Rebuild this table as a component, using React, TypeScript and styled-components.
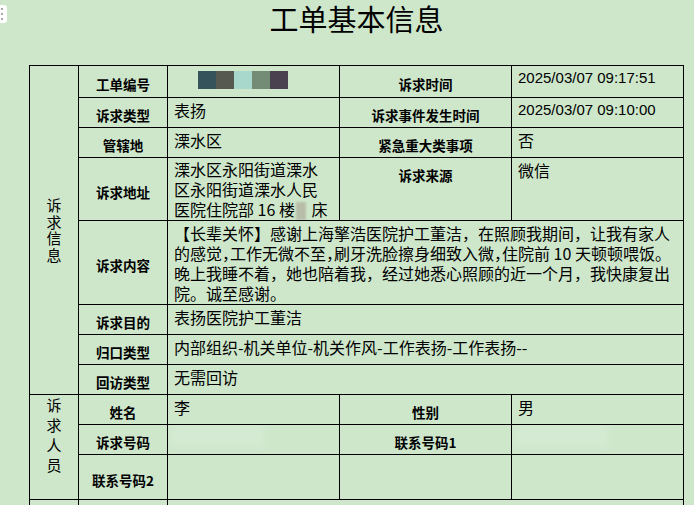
import React from "react";
import styled, { createGlobalStyle } from "styled-components";

const GlobalStyle = createGlobalStyle`
  *, *::before, *::after { box-sizing: border-box; }
  html, body { margin: 0; padding: 0; background: #cee7cb; }
  body {
    font-family: "Noto Sans CJK SC", "Noto Sans", sans-serif;
    color: #000;
  }
`;

const Page = styled.div`
  position: relative;
  min-height: 505px;
  padding: 0 0 0 29px;
  background: #cee7cb;
`;

const Handle = styled.div`
  position: absolute;
  left: 0;
  top: 5px;
  width: 7px;
  height: 18px;
  background: #ffffff;
  border-radius: 0 3px 3px 0;
  display: flex;
  flex-direction: column;
  justify-content: center;
  gap: 3px;
  padding-left: 1px;
`;

const Dot = styled.span`
  width: 2px;
  height: 2px;
  background: #8c8c8c;
  border-radius: 1px;
`;

const Sheet = styled.div`
  width: 655px;
  display: flex;
  flex-direction: column;
`;

const Title = styled.h1`
  margin: 0 0 29px;
  font-size: 29px;
  line-height: 36px;
  font-weight: 400;
  text-align: center;
`;

const Grid = styled.div`
  display: grid;
  grid-template-columns: 48px 88px 171px 171px 171px;
  grid-template-rows: 31px 29px 29px 62px 83px 29px 29px 29px 29px 29px 44px 40px;
  gap: 1px;
  padding: 1px;
  background: #000;
`;

const Cell = styled.div`
  position: relative;
  background: #cee7cb;
  min-width: 0;
  overflow: hidden;
`;

const GroupCell = styled(Cell)<{ $rows: number; $top?: boolean }>`
  grid-column: 1;
  grid-row: span ${(p) => p.$rows};
  display: flex;
  justify-content: center;
  align-items: ${(p) => (p.$top ? "flex-start" : "center")};
  font-size: 15px;
  line-height: ${(p) => (p.$top ? "20px" : "16.5px")};
`;

const VerticalText = styled.span`
  width: 1em;
  word-break: break-all;
  text-align: center;
`;

const Label = styled(Cell)<{ $top?: boolean }>`
  display: flex;
  justify-content: center;
  align-items: ${(p) => (p.$top ? "flex-start" : "center")};
  padding-top: ${(p) => (p.$top ? "9px" : "6px")};
  font-size: 13.5px;
  font-weight: 700;
  line-height: 17px;
  white-space: nowrap;
`;

const Value = styled(Cell)<{ $span?: number; $latin?: boolean; $pt?: number }>`
  grid-column: span ${(p) => p.$span ?? 1};
  padding: ${(p) => p.$pt ?? 2}px 6px 0;
  font-size: ${(p) => (p.$latin ? "15px" : "16px")};
  line-height: 20px;
  font-family: ${(p) =>
    p.$latin ? '"Liberation Sans", Arial, sans-serif' : "inherit"};
  white-space: nowrap;
`;

const Line = styled.div<{ $halt?: boolean }>`
  white-space: nowrap;
  font-feature-settings: ${(p) => (p.$halt ? '"halt"' : "normal")};
`;

const Mosaic = styled.div`
  display: flex;
  margin: 3px 0 0 24px;
`;

const Tile = styled.span<{ $c: string }>`
  width: 18px;
  height: 18px;
  background: ${(p) => p.$c};
`;

const Smudge = styled.span`
  display: inline-block;
  width: 10px;
  height: 18px;
  margin: 0 2px 0 1px;
  vertical-align: -4px;
  background: #b7bda8;
  filter: blur(1.2px);
`;

const Redact = styled.span`
  position: absolute;
  left: 2px;
  top: -2px;
  width: 95px;
  height: 24px;
  background: rgba(255, 255, 255, 0.14);
  filter: blur(4px);
`;

const tiles = ["#35535a", "#55594f", "#a8d8cc", "#748c76", "#4b4250"];

export default function App() {
  return (
    <>
      <GlobalStyle />
      <Page>
        <Handle>
          <Dot />
          <Dot />
          <Dot />
        </Handle>
        <Sheet>
          <Title>工单基本信息</Title>
          <Grid>
            <GroupCell $rows={8}>
              <VerticalText>诉求信息</VerticalText>
            </GroupCell>
            <Label>工单编号</Label>
            <Value>
              <Mosaic>
                {tiles.map((c) => (
                  <Tile key={c} $c={c} />
                ))}
              </Mosaic>
            </Value>
            <Label>诉求时间</Label>
            <Value $latin>2025/03/07 09:17:51</Value>

            <Label>诉求类型</Label>
            <Value>表扬</Value>
            <Label>诉求事件发生时间</Label>
            <Value $latin>2025/03/07 09:10:00</Value>

            <Label>管辖地</Label>
            <Value>溧水区</Value>
            <Label>紧急重大类事项</Label>
            <Value>否</Value>

            <Label>诉求地址</Label>
            <Value $pt={1}>
              <Line>溧水区永阳街道溧水</Line>
              <Line>区永阳街道溧水人民</Line>
              <Line>
                医院住院部 16 楼<Smudge /> 床
              </Line>
            </Value>
            <Label $top>诉求来源</Label>
            <Value>微信</Value>

            <Label>诉求内容</Label>
            <Value $span={3} $pt={2}>
              <Line>【长辈关怀】感谢上海擎浩医院护工董洁，在照顾我期间，让我有家人</Line>
              <Line $halt>的感觉，工作无微不至，刷牙洗脸擦身细致入微，住院前 10 天顿顿喂饭。</Line>
              <Line>晚上我睡不着，她也陪着我，经过她悉心照顾的近一个月，我快康复出</Line>
              <Line>院。诚至感谢。</Line>
            </Value>

            <Label>诉求目的</Label>
            <Value $span={3}>表扬医院护工董洁</Value>

            <Label>归口类型</Label>
            <Value $span={3}>内部组织-机关单位-机关作风-工作表扬-工作表扬--</Value>

            <Label>回访类型</Label>
            <Value $span={3}>无需回访</Value>

            <GroupCell $rows={3} $top>
              <VerticalText>诉求人员</VerticalText>
            </GroupCell>
            <Label>姓名</Label>
            <Value>李</Value>
            <Label>性别</Label>
            <Value>男</Value>

            <Label>诉求号码</Label>
            <Value>
              <Redact />
            </Value>
            <Label>联系号码1</Label>
            <Value>
              <Redact />
            </Value>

            <Label>联系号码2</Label>
            <Value />
            <Label />
            <Value />

            <GroupCell $rows={1} />
            <Label />
            <Value $span={3} />
          </Grid>
        </Sheet>
      </Page>
    </>
  );
}
